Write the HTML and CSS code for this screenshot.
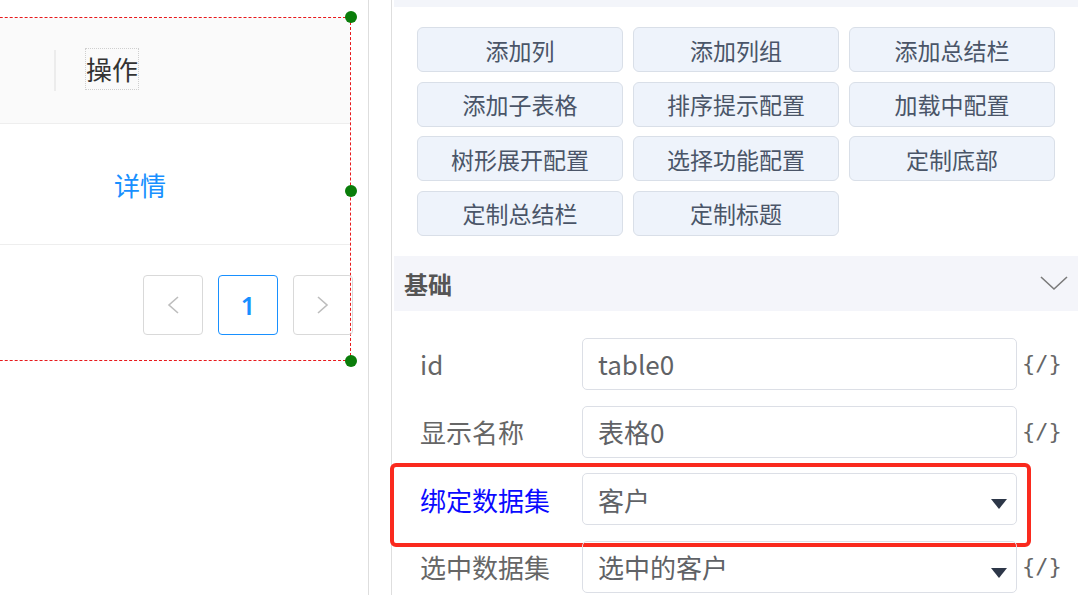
FILE: index.html
```html
<!DOCTYPE html>
<html lang="zh-CN">

<head>
     <meta charset="UTF-8">
     <meta name="viewport" content="width=device-width, initial-scale=1.0">
     <title>表格配置</title>
     <link rel="stylesheet" href="styles.css">
</head>

<body>
     <div class="canvas">
          <div class="comp">
               <div class="thead">
                    <div class="th-first"></div>
                    <div class="th-sep"></div>
                    <div class="th-cell"><span class="th-label">操作</span></div>
               </div>
               <div class="trow">
                    <a class="link">详情</a>
               </div>
               <div class="pager">
                    <button class="page-btn">
                         <svg width="14" height="20" viewBox="0 0 14 20"><polyline points="12,2 3,10 12,18" fill="none" stroke="#bdbdbd" stroke-width="1.6"/></svg>
                    </button>
                    <button class="page-btn active">1</button>
                    <button class="page-btn">
                         <svg width="14" height="20" viewBox="0 0 14 20"><polyline points="2,2 11,10 2,18" fill="none" stroke="#bdbdbd" stroke-width="1.6"/></svg>
                    </button>
               </div>
               <span class="dot dot-top"></span>
               <span class="dot dot-mid"></span>
               <span class="dot dot-bottom"></span>
          </div>
     </div>

     <div class="side">
          <div class="band"></div>

          <div class="btns">
               <button class="cfg-btn">添加列</button>
               <button class="cfg-btn">添加列组</button>
               <button class="cfg-btn">添加总结栏</button>
               <button class="cfg-btn">添加子表格</button>
               <button class="cfg-btn">排序提示配置</button>
               <button class="cfg-btn">加载中配置</button>
               <button class="cfg-btn">树形展开配置</button>
               <button class="cfg-btn">选择功能配置</button>
               <button class="cfg-btn">定制底部</button>
               <button class="cfg-btn">定制总结栏</button>
               <button class="cfg-btn">定制标题</button>
          </div>

          <div class="section-head">
               <span class="section-title">基础</span>
               <svg width="28" height="15" viewBox="0 0 28 15"><polyline points="1,1 14,13 27,1" fill="none" stroke="#7a7a7a" stroke-width="1.6"/></svg>
          </div>

          <div class="form">
               <div class="row">
                    <label class="label">id</label>
                    <div class="input">table0</div>
                    <span class="code">{/}</span>
               </div>
               <div class="row">
                    <label class="label">显示名称</label>
                    <div class="input">表格0</div>
                    <span class="code">{/}</span>
               </div>
               <div class="row marked">
                    <label class="label blue">绑定数据集</label>
                    <div class="input select">客户<span class="caret"></span></div>
               </div>
               <div class="row">
                    <label class="label">选中数据集</label>
                    <div class="input select">选中的客户<span class="caret low"></span></div>
                    <span class="code">{/}</span>
               </div>
          </div>
     </div>
</body>

</html>
```

FILE: styles.css
```css
* {
     box-sizing: border-box;
}

body {
     margin: 0;
     display: flex;
     height: 595px;
     overflow: hidden;
     font-family: "Noto Sans CJK SC", "Noto Sans", sans-serif;
     background: #fff;
}

/* left design canvas */
.canvas {
     width: 369px;
     flex-shrink: 0;
     border-right: 1px solid #dedede;
     padding-top: 17px;
}

.comp {
     position: relative;
     margin-left: -50px;
     width: 401px;
     border: 1px dashed #e8191c;
     border-left: none;
}

.thead {
     display: flex;
     align-items: center;
     height: 106px;
     background: #fafafa;
     border-bottom: 1px solid #eeeeee;
}

.th-first {
     width: 104px;
}

.th-sep {
     width: 2px;
     height: 41px;
     background: #ececec;
}

.th-cell {
     padding-left: 29px;
     margin-bottom: 4px;
}

.th-label {
     display: inline-block;
     border: 1px dotted #cfcfcf;
     font-size: 26px;
     line-height: 40px;
     color: #333;
}

.trow {
     height: 121px;
     display: flex;
     align-items: center;
     padding-left: 164px;
     border-bottom: 1px solid #eeeeee;
}

.link {
     font-size: 26px;
     color: #1890ff;
}

.pager {
     display: flex;
     gap: 15px;
     padding: 30px 0 25px 193px;
}

.page-btn {
     width: 60px;
     height: 60px;
     flex-shrink: 0;
     border: 1px solid #d9d9d9;
     border-radius: 4px;
     background: transparent;
     display: flex;
     align-items: center;
     justify-content: center;
     padding: 0;
     font-family: "Noto Sans", sans-serif;
     font-size: 25px;
     font-weight: 600;
     color: #1890ff;
}

.page-btn.active {
     border-color: #1890ff;
}

.dot {
     position: absolute;
     right: -7px;
     width: 12px;
     height: 12px;
     border-radius: 50%;
     background: #0a7d0a;
}

.dot-top {
     top: -7px;
}

.dot-mid {
     top: 167px;
}

.dot-bottom {
     bottom: -7px;
}

/* right property panel */
.side {
     flex: 1;
     margin-left: 22px;
     border-left: 1px solid #dedede;
     padding-left: 2px;
}

.band {
     height: 7px;
     background: #f3f5fa;
}

.btns {
     display: grid;
     grid-template-columns: repeat(3, 1fr);
     grid-auto-rows: 45px;
     column-gap: 10px;
     row-gap: 9.67px;
     padding: 20px 23px 0 23px;
}

.cfg-btn {
     border: 1px solid #d9dfe8;
     border-radius: 6px;
     background: #eef3fb;
     font-family: "Noto Sans CJK SC", sans-serif;
     font-size: 23px;
     color: #4a5568;
     padding: 0;
}

.section-head {
     margin-top: 20px;
     height: 55px;
     background: #f4f5fa;
     display: flex;
     align-items: center;
     justify-content: space-between;
     padding: 0 10px 0 10px;
}

.section-title {
     font-size: 24px;
     font-weight: 700;
     color: #555;
}

.form {
     padding: 27px 0 0 26px;
}

.row {
     position: relative;
     display: flex;
     align-items: center;
     height: 52px;
     margin-bottom: 15.67px;
}

.row.marked::after {
     content: "";
     position: absolute;
     left: -30px;
     top: -10px;
     width: 633px;
     height: 76px;
     border: 4px solid #fa2a1e;
     border-radius: 6px;
}

.label {
     width: 162px;
     flex-shrink: 0;
     font-size: 26px;
     color: #666;
}

.label.blue {
     color: #0a0aff;
}

.input {
     position: relative;
     width: 435px;
     height: 52px;
     flex-shrink: 0;
     border: 1px solid #dcdfe6;
     border-radius: 5px;
     padding-left: 15px;
     display: flex;
     align-items: center;
     font-size: 26px;
     color: #606266;
}

.caret {
     position: absolute;
     right: 9px;
     top: 25px;
     width: 0;
     height: 0;
     border-left: 8px solid transparent;
     border-right: 8px solid transparent;
     border-top: 10px solid #2d3748;
}

.caret.low {
     top: 26px;
}

.code {
     margin-left: 5px;
     font-family: "DejaVu Sans Mono", monospace;
     font-size: 22px;
     color: #666;
}
```
